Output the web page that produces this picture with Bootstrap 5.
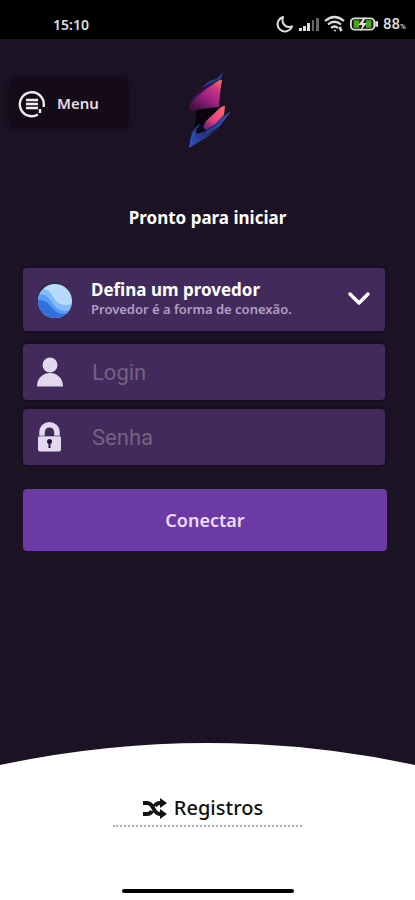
<!DOCTYPE html>
<html lang="pt-BR">
<head>
<meta charset="utf-8">
<meta name="viewport" content="width=device-width, initial-scale=1">
<title>Pronto para iniciar</title>
<link href="https://cdn.jsdelivr.net/npm/bootstrap@5.3.0/dist/css/bootstrap.min.css" rel="stylesheet">
<style>
body{background:#1b1224;font-family:"Noto Sans","Open Sans",sans-serif;color:#fff}
.status-bar{background:#000;height:39px;padding:10px 9px 0 53px;color:#ddd}
.clock{font-size:14px;line-height:30px;font-weight:600}
.percent{font-family:Roboto,sans-serif;font-size:15px;font-weight:500}
.percent small{font-size:8px}
.top-row{display:grid;grid-template-columns:1fr 52px 1fr;padding:32px 9px 0}
.menu-btn{width:120px;height:51px;margin-top:7px;padding:0 9px;gap:11px;background:#150a18;color:#e4dfe7;border:0;border-radius:6px;box-shadow:0 0 4px #150a18;font-size:15px;font-weight:600}
.heading{font-size:17px;line-height:24px;font-weight:700;margin:55px 0 38px}
.login-form{padding:0 30px 0 23px}
.field{background:#422b5c;border-radius:4px;box-shadow:0 0 3px #12091c}
.provider{height:63px;padding:0 14px 3px 13px;border:0;color:#fff}
.orb-slot{width:55px}
.provider-name{font-size:17px;line-height:22px;font-weight:700}
.provider-note{font-size:13px;line-height:16px;font-weight:600;color:#af9fc0}
.entry{height:56px;padding-left:13px;margin-top:9px}
.provider + .entry{margin-top:13px}
.entry input,.entry input:focus{background:transparent;border:0;box-shadow:none;color:#fff;font-family:Roboto,sans-serif;font-size:22px;padding:0 0 0 1px}
.entry input::placeholder{color:#76627f;opacity:1}
.connect{background:#6b3aa4;color:#eadcfb;height:62px;border:0;border-radius:4px;font-size:18px;font-weight:600;margin:24px -2px 0 0}
.connect:hover{background:#7745b1;color:#fff}
.curve{height:22px;width:100%}
.sheet{background:#fff;height:135px;padding:29px 0 7px}
.logs{width:189px;height:33px;padding-right:10px;gap:7px;color:#111;font-size:20px;line-height:28px;font-weight:500;border-bottom:2px dotted #aaa}
.home-bar{width:172px;height:4px;background:#000;border-radius:2px}
</style>
</head>
<body class="min-vh-100 d-flex flex-column">
<header>
  <div class="status-bar d-flex justify-content-between align-items-start">
    <span class="clock">15:10</span>
    <div class="d-flex align-items-center gap-1 lh-1 pt-1">
      <svg width="18" height="20" viewBox="0 0 18 20" fill="none" stroke="#ddd" stroke-width="2"><path d="M7 3C1 5 0 12 4 15.500c4 3.500 10 2 12-3C9 14.500 5 9 7 3Z" stroke-linejoin="round"/></svg>
      <svg width="22" height="20" viewBox="0 0 22 20"><g fill="#ddd"><path d="M1 14h3v3H1zM5 12h3v5H5zM9 9h3v8H9z"/></g><path fill="#666" d="M14 6h2v11h-2zM18 4h3v13h-3z"/></svg>
      <svg width="21" height="20" viewBox="0 0 21 20" fill="none" stroke="#ddd" stroke-width="2.200"><path d="M1 7q9.500-8 19 0M4 10.500q6.500-5.500 13 0M7 14q3.500-3 7 0"/><path d="m10.500 17 1-1M15 15l2-2m-1 4 2-2"/></svg>
      <svg width="30" height="18" viewBox="0 0 32 18"><rect x="2" y="3" width="25" height="12" rx="4" fill="#111" stroke="#ddd" stroke-width="2"/><path fill="#4da51e" d="M5 5h6v8H5zM18 5h6v8h-6z"/><path fill="#ddd" d="M28 6h3v6h-3zM16 2l-6 8h4l-2 7 7-9h-4l3-6z"/></svg>
      <span class="percent">88<small>%</small></span>
    </div>
  </div>
  <div class="top-row">
    <button type="button" class="menu-btn btn d-flex align-items-center">
      <svg width="28" height="28" viewBox="0 0 28 28" fill="none" stroke="#eee" stroke-width="2.400"><path d="M20 24.500a12 12 0 1 1 5.500-7.500M22 19v4M8 10h12M8 14h12M8 18h12"/></svg>
      Menu
    </button>
    <svg width="52" height="80" viewBox="0 0 52 80" role="img" aria-label="Logo">
      <defs>
        <linearGradient id="bolt" x1="1" y1="0" x2=".3" y2="1"><stop stop-color="#ff7a60"/><stop offset=".3" stop-color="#c93483"/><stop offset=".65" stop-color="#94207b"/><stop offset="1" stop-color="#4a1148"/></linearGradient>
        <linearGradient id="tail" x1="1" y1="0" x2="0" y2="1"><stop stop-color="#ff7165"/><stop offset=".6" stop-color="#e13b82"/><stop offset="1" stop-color="#371b69"/></linearGradient>
        <linearGradient id="edge" x1="1" y1="0" x2="0" y2="1"><stop stop-color="#2c55b8"/><stop offset=".5" stop-color="#202b66"/><stop offset="1" stop-color="#3154c8"/></linearGradient>
      </defs>
      <path fill="#233e8a" d="m41 1-2 7-20 9 8-7 7-2z"/>
      <path fill="#321047" d="M32 11 14 21l-6 11 14-8z"/>
      <path fill="#08040e" d="m15 36-2 18-2 9 14-8 13-20-2-10z"/>
      <path fill="url(#bolt)" d="M40 9Q39 8 36 10C26 16 17 23 8 33Q6 37 10 39q3 1 8-1l19-2q1-16 3-27z"/>
      <path fill="url(#edge)" d="m48 41-9 13-12 11-12 7-8 5 3-16 7-9 1 7 10-4z"/>
      <path fill="url(#tail)" d="M43 35q-3 0-5 2L24 50l-4 7 5 1 8-5 9-9z"/>
      <path fill="#0d0819" d="m19 53-6 7 2 3 9-3z"/>
      <path fill="none" stroke="#3459c9" d="M48 41 37 54 24 62M14 59 9 68l-1 8"/>
    </svg>
  </div>
</header>
<main>
  <h1 class="heading text-center">Pronto para iniciar</h1>
  <form class="login-form">
    <button type="button" class="field provider w-100 d-flex align-items-center text-start">
      <span class="orb-slot flex-shrink-0 pt-1">
        <svg width="38" height="38" viewBox="0 0 38 38"><defs><clipPath id="globe"><circle cx="19" cy="20" r="17"/></clipPath></defs><circle cx="18.500" cy="17.500" r="17" fill="#302c3c"/><g clip-path="url(#globe)"><path fill="#b9dbfb" d="M0 0h38v38H0z"/><path fill="#82bafa" d="M0 10c10-5 14 0 18 7s11 9 20 5v18H0z"/><path fill="#569bf4" d="M0 15c10-4 13 2 18 9s12 8 20 3v12H0z"/><path fill="#2f70dd" d="M0 20c10-3 13 4 18 9s10 4 14 3v8H0z"/></g></svg>
      </span>
      <span class="flex-grow-1">
        <span class="provider-name d-block">Defina um provedor</span>
        <span class="provider-note d-block">Provedor é a forma de conexão.</span>
      </span>
      <svg width="24" height="16" viewBox="0 0 24 16" fill="none" stroke="#fff" stroke-width="3.500" stroke-linecap="round" stroke-linejoin="round"><path d="m3 4 9 9 9-9"/></svg>
    </button>
    <div class="field entry d-flex align-items-center">
      <label for="login" class="orb-slot flex-shrink-0" aria-label="Login"><svg width="28" height="32" viewBox="0 0 28 32" fill="#e2d9ef"><circle cx="14" cy="9" r="7.500"/><path d="M1 30.500c0-18 26-18 26 0z"/></svg></label>
      <input id="login" class="form-control" type="text" placeholder="Login">
    </div>
    <div class="field entry d-flex align-items-center">
      <label for="senha" class="orb-slot flex-shrink-0" aria-label="Senha"><svg width="28" height="32" viewBox="0 0 28 32"><path fill="none" stroke="#e2d9ef" stroke-width="5.500" d="M6 15v-3c0-11 15-11 15 0v3"/><rect x="2" y="15" width="23" height="15.500" rx="2" fill="#e2d9ef"/><path stroke="#24103e" stroke-opacity=".5" d="M3 15h21"/><circle cx="13.500" cy="20.500" r="2.500" fill="#24103e"/><path fill="#24103e" d="M12.500 20h2v7h-2z"/></svg></label>
      <input id="senha" class="form-control" type="password" placeholder="Senha">
    </div>
    <div class="d-flex"><button type="button" class="btn connect flex-grow-1">Conectar</button></div>
  </form>
</main>
<footer class="mt-auto">
  <svg class="curve d-block" viewBox="0 0 415 22" preserveAspectRatio="none"><path fill="#fff" d="M0 22Q207.500-22 415 22z"/></svg>
  <div class="sheet d-flex flex-column align-items-center justify-content-between">
    <a href="#" class="logs d-flex align-items-start justify-content-center text-decoration-none">
      <svg width="25" height="28" viewBox="0 0 25 28" fill="none" stroke="#111" stroke-width="4"><path d="M1 9h4c8 0 5 11 13 11h1M1 20h4c3 0 4-1 5-3M13 12c1-2 2-3 5-3h1"/><path fill="#111" stroke="none" d="m18 4 7 5-7 5zM18 15l7 5-7 5z"/></svg>
      Registros
    </a>
    <div class="home-bar"></div>
  </div>
</footer>
<script src="https://cdn.jsdelivr.net/npm/bootstrap@5.3.0/dist/js/bootstrap.bundle.min.js"></script>
</body>
</html>
